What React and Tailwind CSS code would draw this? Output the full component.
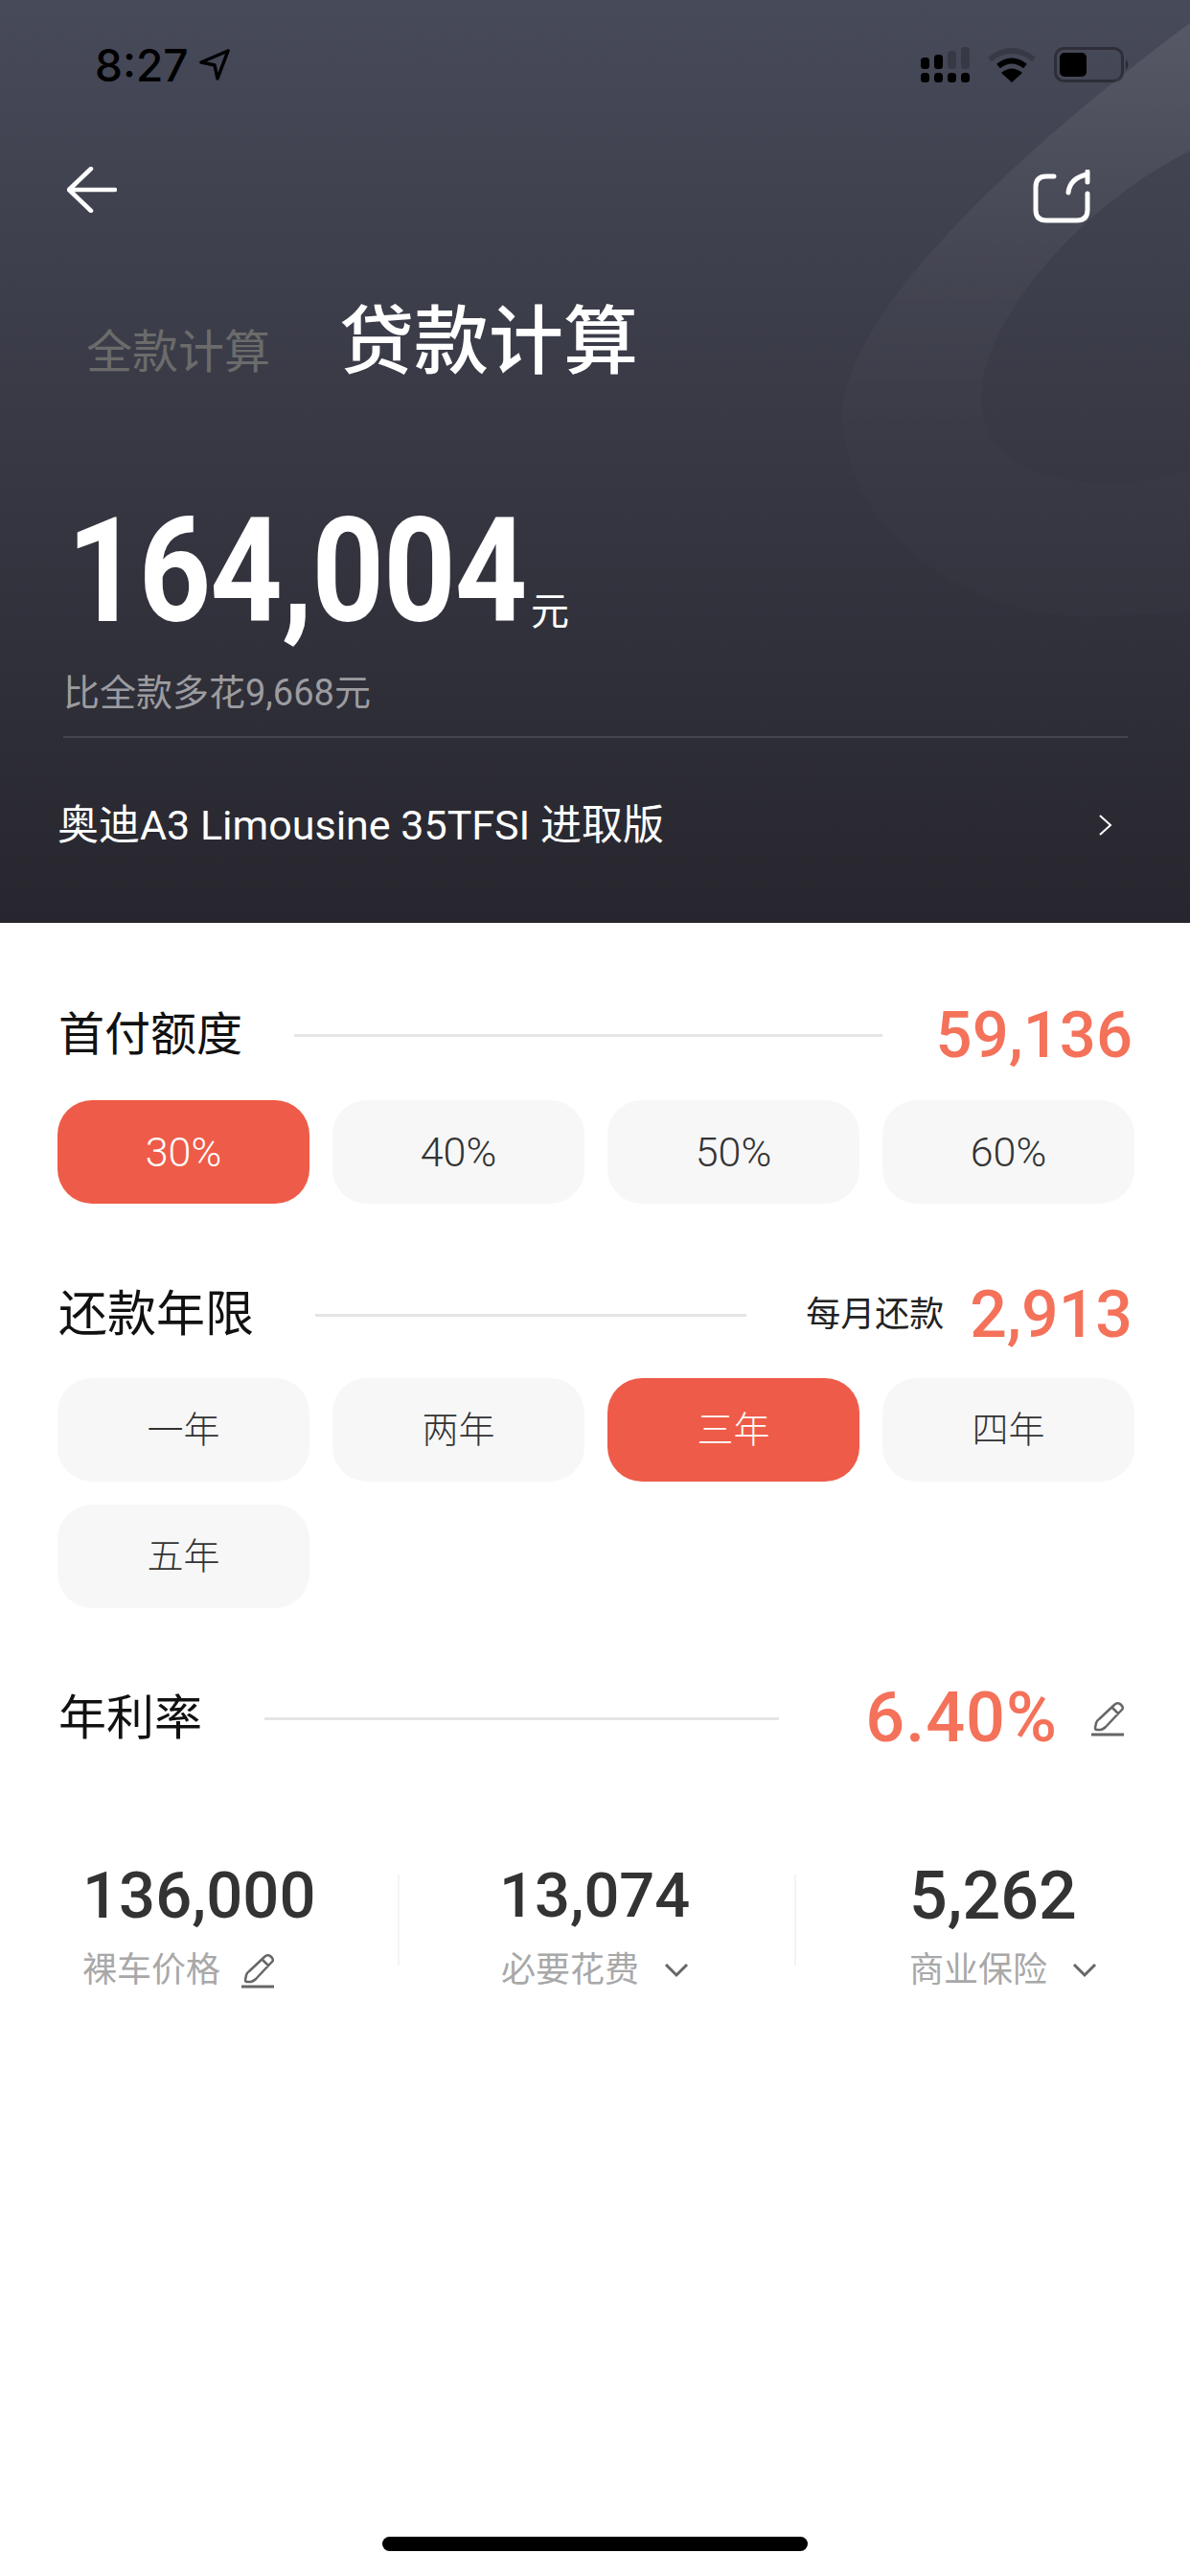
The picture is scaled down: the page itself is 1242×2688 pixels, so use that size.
import React from "react";

const Choice = ({ label, active, percent }) => (
  <div
    className={`flex h-[108px] w-[263px] items-center justify-center rounded-[36px] font-light ${
      percent ? "text-[43px]" : "text-[38px]"
    } ${active ? "bg-[#ee5b48] text-white" : "bg-[#f7f7f7] text-[#333333]"}`}
  >
    {label}
  </div>
);

const Pencil = () => (
  <svg width="34" height="37" viewBox="0 0 34 37" fill="none" stroke="#666666" className="overflow-visible">
    <path
      d="M24 4 Q27 1 30 3 L32 5 Q34 8 31 10 L15 27 Q13 29 10 30 L6 30 Q4 30 4 28 L5 23 Q6 20 8 19 Z M22 7 L28 13"
      strokeWidth="2.5"
      strokeLinejoin="round"
    />
    <path d="M0 35 H34" strokeWidth="3" />
  </svg>
);

const Chevron = () => (
  <svg width="26" height="16" viewBox="0 0 26 16" fill="none" stroke="#666666" strokeWidth="3">
    <path d="M2 2 L13 13 L24 2" />
  </svg>
);

const Signal = () => (
  <svg width="51" height="37" viewBox="0 0 51 37">
    <rect x="0" y="27" width="9" height="10" rx="3.5" fill="#000" />
    <rect x="14" y="27" width="9" height="10" rx="3.5" fill="#000" />
    <rect x="28" y="27" width="9" height="10" rx="3.5" fill="#000" />
    <rect x="42" y="27" width="9" height="10" rx="3.5" fill="#000" />
    <rect x="0" y="11" width="9" height="12" rx="3.5" fill="#000" />
    <rect x="14" y="8" width="9" height="15" rx="3.5" fill="#000" />
    <rect x="28" y="4" width="9" height="19" rx="3.5" fill="#000" fillOpacity="0.2" />
    <rect x="42" y="0" width="9" height="23" rx="3.5" fill="#000" fillOpacity="0.2" />
  </svg>
);

const Wifi = () => (
  <svg width="50" height="37" viewBox="0 0 50 37" fill="none" stroke="#000">
    <path d="M2 13 Q25 -5 48 13" strokeWidth="6" strokeOpacity="0.2" />
    <path d="M11 20 Q25 9 39 20" strokeWidth="6" />
    <path d="M25 37 L14 27 Q25 18 36 27 Z" fill="#000" stroke="none" />
  </svg>
);

const Battery = () => (
  <svg width="80" height="37" viewBox="0 0 80 37">
    <rect x="1.5" y="1.5" width="70" height="34" rx="9" fill="none" stroke="#000" strokeOpacity="0.35" strokeWidth="3" />
    <rect x="6" y="6" width="28" height="25" rx="5" fill="#000" />
    <path d="M75 13 Q80 18 75 24 Z" fill="#000" fillOpacity="0.4" />
  </svg>
);

const App = () => {
  return (
    <div className="relative h-[2688px] w-[1242px] overflow-hidden bg-white font-['Roboto','Noto_Sans_CJK_SC',sans-serif]">
      {/* Header */}
      <div className="relative h-[963px] overflow-hidden bg-gradient-to-b from-[#474a59] to-[#27262e]">
        <svg className="absolute left-0 top-0" width="1242" height="963" viewBox="0 0 1242 963">
          <defs>
            <linearGradient id="band" x1="0" y1="0" x2="0" y2="1">
              <stop offset="0" stopColor="#fff" stopOpacity="0.085" />
              <stop offset="0.45" stopColor="#fff" stopOpacity="0.03" />
              <stop offset="0.7" stopColor="#fff" stopOpacity="0.01" />
              <stop offset="1" stopColor="#fff" stopOpacity="0.012" />
            </linearGradient>
          </defs>
          <path
            d="M1242 24 C1100 130 900 300 880 420 C870 540 1000 650 1150 643 C1190 641 1220 640 1242 637 L1242 490 C1200 505 1140 510 1090 495 C1040 480 1020 450 1025 400 C1035 330 1120 220 1242 157 Z"
            fill="url(#band)"
          />
        </svg>

        <div className="relative">
          {/* Status bar */}
          <div className="flex h-[90px] items-end justify-between pl-[99px] pr-[62px]">
            <div className="flex items-center gap-[11px] font-['Inter'] text-[46px] font-medium leading-[44px] text-black">
              8:27
              <svg width="32" height="34" viewBox="0 0 32 34" fill="none" stroke="#000" strokeWidth="3.5" strokeLinejoin="round">
                <path d="M30 2 L2 14 L16 17 L19 31 Z" />
              </svg>
            </div>
            <div className="flex items-center gap-[19px] pb-[4px]">
              <Signal />
              <Wifi />
              <Battery />
            </div>
          </div>

          {/* Nav */}
          <div className="mt-[84px] flex items-start justify-between pl-[70px] pr-[104px]">
            <svg width="52" height="48" viewBox="0 0 52 48" fill="none" stroke="#fff" strokeWidth="4.5" strokeLinecap="round" strokeLinejoin="round">
              <path d="M25 2 L2 24 L25 46 M2 24 H50" />
            </svg>
            <svg className="mt-[3px]" width="60" height="56" viewBox="0 0 60 56" fill="none" stroke="#fff" strokeWidth="5" strokeLinecap="round">
              <path d="M22 7 H14 Q3 7 3 18 V42 Q3 53 14 53 H46 Q57 53 57 42 V25" />
              <path d="M37 24 C38 14 44 8 56 5 M57 2 V13" />
            </svg>
          </div>

          {/* Tabs */}
          <div className="mt-[83px] flex items-end pl-[90px]">
            <span className="text-[48px] leading-[64px] text-[#6b6b6b]">全款计算</span>
            <span className="ml-[72px] text-[78px] font-medium leading-[84px] text-white">贷款计算</span>
          </div>

          {/* Amount */}
          <div className="mt-[131px] flex items-end pl-[70px]">
            <div className="w-[484px] origin-left scale-x-[0.866] whitespace-nowrap text-[152px] font-bold leading-[130px] tracking-[-1px] text-white">
              164,004
            </div>
            <span className="text-[40px] leading-[44px] text-white">元</span>
          </div>
          <div className="ml-[66px] mt-[38px] text-[38px] leading-[48px] text-[#9c9ca0]">比全款多花9,668元</div>
          <div className="ml-[66px] mr-[65px] mt-[21px] h-[2px] bg-[#45454f]"></div>

          {/* Car */}
          <div className="mt-[63px] flex items-center justify-between pl-[60px] pr-[80px]">
            <span className="text-[43px] leading-[56px] text-white">奥迪A3 Limousine 35TFSI 进取版</span>
            <svg width="17" height="24" viewBox="0 0 17 24" fill="none" stroke="#fff" strokeWidth="2">
              <path d="M3 2 L14 12 L3 22" />
            </svg>
          </div>
        </div>
      </div>

      {/* Down payment */}
      <div className="mt-[77px] flex h-[80px] items-center pl-[61px] pr-[60px]">
        <span className="text-[48px] leading-[64px] text-[#111111]">首付额度</span>
        <div className="ml-[54px] h-[3px] w-[614px] bg-[#e5e5e5]"></div>
        <span className="ml-auto text-[67px] font-medium leading-[80px] text-[#f4715a]">59,136</span>
      </div>
      <div className="mt-[28px] flex gap-[24px] pl-[60px]">
        <Choice label="30%" percent active />
        <Choice label="40%" percent />
        <Choice label="50%" percent />
        <Choice label="60%" percent />
      </div>

      {/* Loan term */}
      <div className="mt-[76px] flex h-[80px] items-center pl-[61px] pr-[60px]">
        <span className="text-[51px] leading-[64px] text-[#111111]">还款年限</span>
        <div className="ml-[64px] h-[3px] w-[450px] bg-[#e5e5e5]"></div>
        <span className="ml-auto text-[36px] leading-[48px] text-[#222222]">每月还款</span>
        <span className="ml-[27px] text-[68px] font-medium leading-[80px] text-[#f4715a]">2,913</span>
      </div>
      <div className="mt-[26px] flex w-[1242px] flex-wrap gap-[24px] pl-[60px]">
        <Choice label="一年" />
        <Choice label="两年" />
        <Choice label="三年" active />
        <Choice label="四年" />
        <Choice label="五年" />
      </div>

      {/* Rate */}
      <div className="mt-[75px] flex h-[80px] items-center pl-[61px] pr-[69px]">
        <span className="text-[50px] leading-[64px] text-[#111111]">年利率</span>
        <div className="ml-[65px] h-[3px] w-[537px] bg-[#e5e5e5]"></div>
        <span className="ml-auto text-[72px] font-medium leading-[80px] tracking-[1px] text-[#f4715a]">6.40%</span>
        <span className="ml-[35px]"><Pencil /></span>
      </div>

      {/* Costs */}
      <div className="mt-[105px] flex items-start">
        <div className="w-[415px] pl-[86px]">
          <div className="text-[67px] font-medium leading-[80px] text-[#333333]">136,000</div>
          <div className="mt-[14px] flex items-center gap-[22px] text-[36px] leading-[48px] text-[#a8a8a8]">
            裸车价格
            <Pencil />
          </div>
        </div>
        <div className="mt-[18px] h-[95px] w-[2px] bg-[#f4f4f4]"></div>
        <div className="w-[412px] pl-[104px]">
          <div className="text-[65px] font-medium leading-[80px] text-[#333333]">13,074</div>
          <div className="mt-[14px] flex items-center gap-[26px] pl-[2px] text-[36px] leading-[48px] text-[#a8a8a8]">
            必要花费
            <Chevron />
          </div>
        </div>
        <div className="mt-[18px] h-[95px] w-[2px] bg-[#f4f4f4]"></div>
        <div className="pl-[118px]">
          <div className="text-[70px] font-medium leading-[80px] text-[#333333]">5,262</div>
          <div className="mt-[14px] flex items-center gap-[26px] text-[36px] leading-[48px] text-[#a8a8a8]">
            商业保险
            <Chevron />
          </div>
        </div>
      </div>

      {/* Home indicator */}
      <div className="absolute bottom-[26px] left-[399px] h-[15px] w-[444px] rounded-full bg-black"></div>
    </div>
  );
};

export default App;
